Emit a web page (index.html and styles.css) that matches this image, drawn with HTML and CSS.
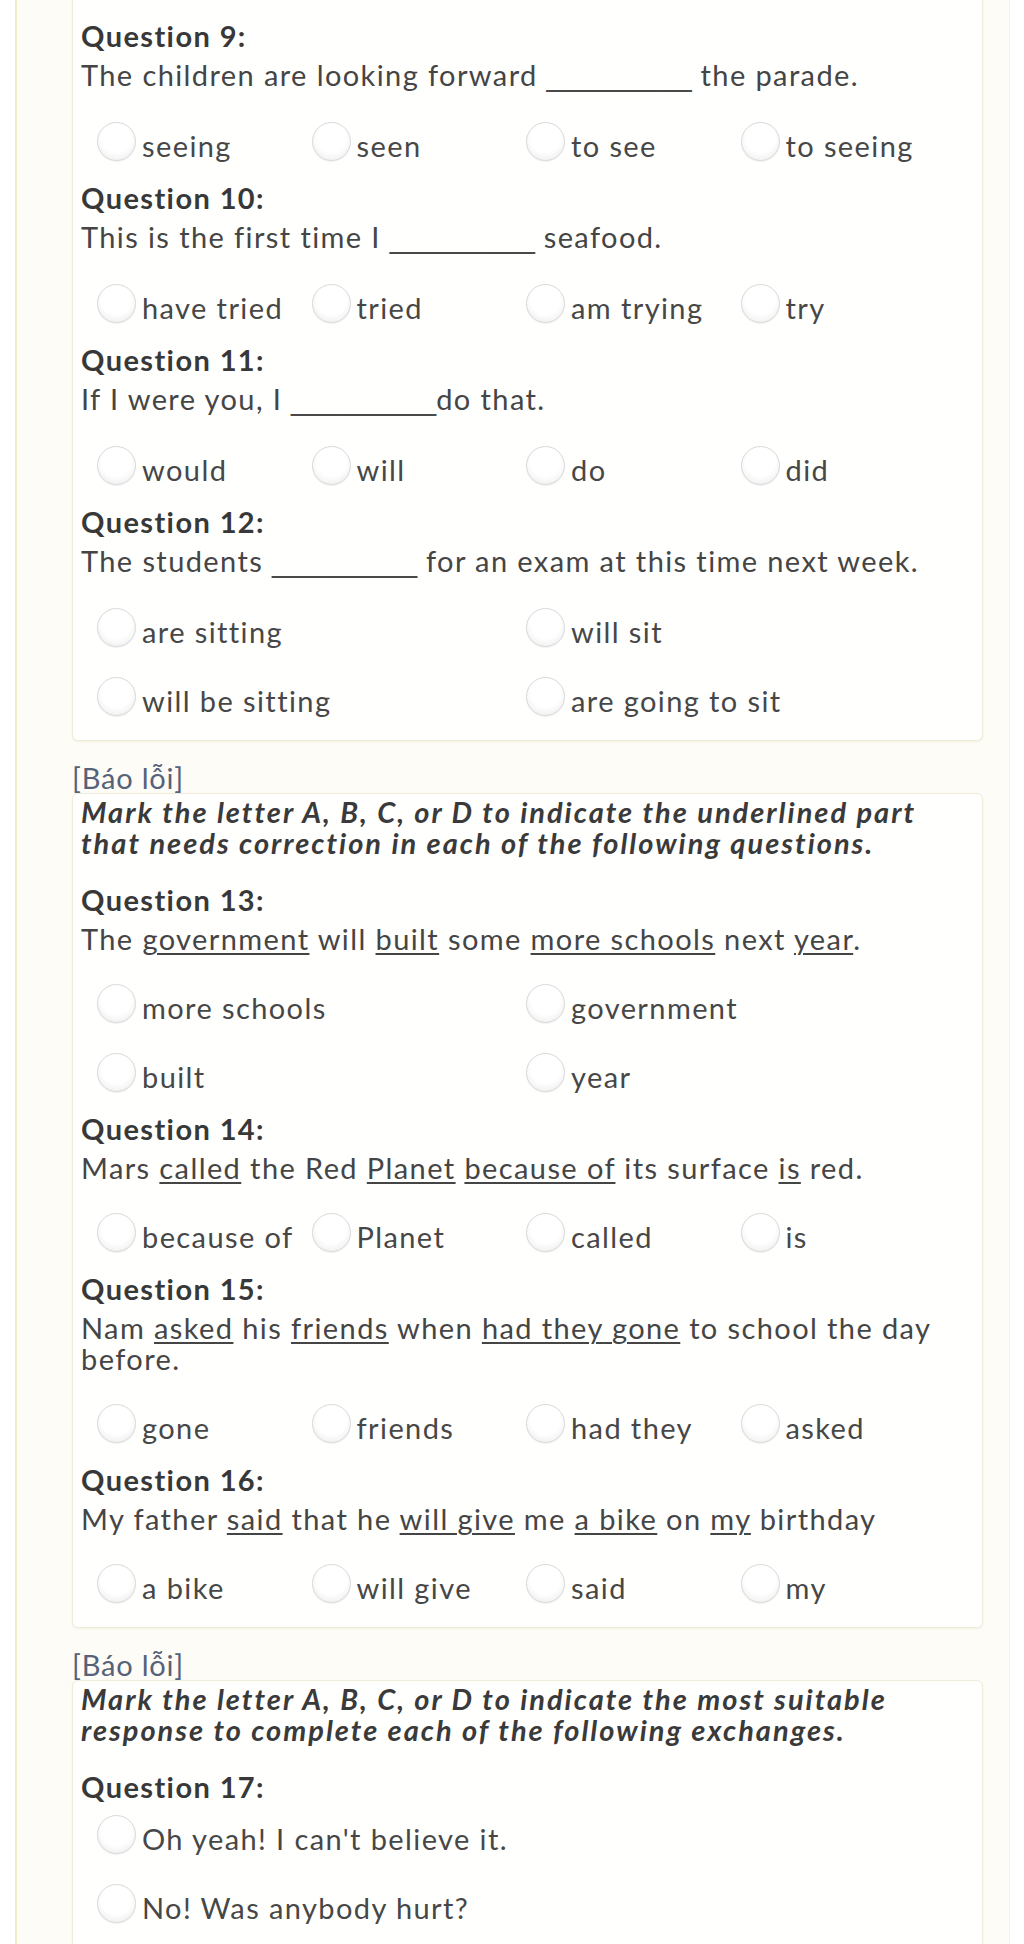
FILE: index.html
```html
<!DOCTYPE html>
<html lang="en">
<head>
<meta charset="utf-8">
<title>Quiz</title>
<link rel="stylesheet" href="styles.css">
</head>
<body>
<div class="page">
  <div class="card card-top">
    <div class="question">
      <div class="q-title">Question 9:</div>
      <div class="q-text">The children are looking forward <span class="blank">_________</span> the parade.</div>
      <div class="options four">
        <label class="opt"><span class="radio"></span><span class="lbl">seeing</span></label>
        <label class="opt"><span class="radio"></span><span class="lbl">seen</span></label>
        <label class="opt"><span class="radio"></span><span class="lbl">to see</span></label>
        <label class="opt"><span class="radio"></span><span class="lbl">to seeing</span></label>
      </div>
    </div>
    <div class="question">
      <div class="q-title">Question 10:</div>
      <div class="q-text">This is the first time I <span class="blank">_________</span> seafood.</div>
      <div class="options four">
        <label class="opt"><span class="radio"></span><span class="lbl">have tried</span></label>
        <label class="opt"><span class="radio"></span><span class="lbl">tried</span></label>
        <label class="opt"><span class="radio"></span><span class="lbl">am trying</span></label>
        <label class="opt"><span class="radio"></span><span class="lbl">try</span></label>
      </div>
    </div>
    <div class="question">
      <div class="q-title">Question 11:</div>
      <div class="q-text">If I were you, I <span class="blank">_________</span>do that.</div>
      <div class="options four">
        <label class="opt"><span class="radio"></span><span class="lbl">would</span></label>
        <label class="opt"><span class="radio"></span><span class="lbl">will</span></label>
        <label class="opt"><span class="radio"></span><span class="lbl">do</span></label>
        <label class="opt"><span class="radio"></span><span class="lbl">did</span></label>
      </div>
    </div>
    <div class="question">
      <div class="q-title">Question 12:</div>
      <div class="q-text">The students <span class="blank">_________</span> for an exam at this time next week.</div>
      <div class="options two">
        <label class="opt"><span class="radio"></span><span class="lbl">are sitting</span></label>
        <label class="opt"><span class="radio"></span><span class="lbl">will sit</span></label>
        <label class="opt"><span class="radio"></span><span class="lbl">will be sitting</span></label>
        <label class="opt"><span class="radio"></span><span class="lbl">are going to sit</span></label>
      </div>
    </div>
  </div>

  <a class="report" href="#">[Báo lỗi]</a>
  <div class="card">
    <div class="instr">Mark the letter A, B, C, or D to indicate the underlined part that needs correction in each of the following questions.</div>
    <div class="question">
      <div class="q-title">Question 13:</div>
      <div class="q-text">The <u>government</u> will <u>built</u> some <u>more schools</u> next <u>year</u>.</div>
      <div class="options two">
        <label class="opt"><span class="radio"></span><span class="lbl">more schools</span></label>
        <label class="opt"><span class="radio"></span><span class="lbl">government</span></label>
        <label class="opt"><span class="radio"></span><span class="lbl">built</span></label>
        <label class="opt"><span class="radio"></span><span class="lbl">year</span></label>
      </div>
    </div>
    <div class="question">
      <div class="q-title">Question 14:</div>
      <div class="q-text">Mars <u>called</u> the Red <u>Planet</u> <u>because of</u> its surface <u>is</u> red.</div>
      <div class="options four">
        <label class="opt"><span class="radio"></span><span class="lbl">because of</span></label>
        <label class="opt"><span class="radio"></span><span class="lbl">Planet</span></label>
        <label class="opt"><span class="radio"></span><span class="lbl">called</span></label>
        <label class="opt"><span class="radio"></span><span class="lbl">is</span></label>
      </div>
    </div>
    <div class="question">
      <div class="q-title">Question 15:</div>
      <div class="q-text">Nam <u>asked</u> his <u>friends</u> when <u>had they</u><u> gone</u> to school the day <span>before.</span></div>
      <div class="options four">
        <label class="opt"><span class="radio"></span><span class="lbl">gone</span></label>
        <label class="opt"><span class="radio"></span><span class="lbl">friends</span></label>
        <label class="opt"><span class="radio"></span><span class="lbl">had they</span></label>
        <label class="opt"><span class="radio"></span><span class="lbl">asked</span></label>
      </div>
    </div>
    <div class="question">
      <div class="q-title">Question 16:</div>
      <div class="q-text">My father <u>said</u> that he <u>will give</u> me <u>a bike</u> on <u>my</u> birthday</div>
      <div class="options four">
        <label class="opt"><span class="radio"></span><span class="lbl">a bike</span></label>
        <label class="opt"><span class="radio"></span><span class="lbl">will give</span></label>
        <label class="opt"><span class="radio"></span><span class="lbl">said</span></label>
        <label class="opt"><span class="radio"></span><span class="lbl">my</span></label>
      </div>
    </div>
  </div>

  <a class="report" href="#">[Báo lỗi]</a>
  <div class="card">
    <div class="instr">Mark the letter A, B, C, or D to indicate the most suitable response to complete each of the following exchanges.</div>
    <div class="question">
      <div class="q-title">Question 17:</div>
      <div class="options one no-text">
        <label class="opt"><span class="radio"></span><span class="lbl">Oh yeah! I can't believe it.</span></label>
        <label class="opt"><span class="radio"></span><span class="lbl">No! Was anybody hurt?</span></label>
      </div>
    </div>
  </div>
</div>
</body>
</html>
```

FILE: styles.css
```css
html, body {
  margin: 0;
  padding: 0;
  background: #ffffff;
}

body {
  font-family: Lato, "Noto Sans", "Liberation Sans", sans-serif;
  font-size: 29px;
  line-height: 31px;
  letter-spacing: 1.4px;
  color: #454545;
  height: 1944px;
  overflow: hidden;
}

.page {
  margin-left: 15px;
  width: 995px;
  box-sizing: border-box;
  min-height: 1944px;
  background: #fdfcf6;
  border-left: 2px solid #efedc6;
  border-right: 1px solid #f5f3e4;
  padding: 0 26px 0 55px;
}

.card {
  background: #fffffe;
  border: 1px solid #f0ecda;
  border-radius: 6px;
  box-shadow: 0 1px 2px rgba(220, 210, 170, 0.25);
  padding: 2px 8px 3px 8px;
}

.card-top {
  border-top: 0;
  border-radius: 0 0 6px 6px;
  padding-top: 20px;
}

.report {
  display: block;
  margin-top: 22px;
  line-height: 30px;
  color: #56627a;
  text-decoration: none;
  letter-spacing: 0.8px;
}

.instr {
  font-weight: 700;
  font-style: italic;
  color: #3a3a3a;
  margin-bottom: 26px;
  letter-spacing: 2px;
}

.question {
  margin-bottom: 21px;
}

.q-title {
  font-weight: 700;
  color: #383838;
  margin-bottom: 8px;
}

.blank {
  font-family: "Liberation Sans", Arial, sans-serif;
  letter-spacing: 0;
  color: #4a4a4a;
}

.q-text u {
  text-decoration-thickness: 2px;
  text-underline-offset: 3px;
}

.options {
  display: grid;
  margin-top: 30px;
  margin-left: 8px;
  row-gap: 30px;
}

.options.no-text {
  margin-top: 13px;
}

.options.four {
  grid-template-columns: repeat(4, 214.5px);
}

.options.two {
  grid-template-columns: repeat(2, 429px);
}

.options.one {
  grid-template-columns: 858px;
}

.opt {
  display: flex;
  align-items: flex-start;
}

.radio {
  flex: none;
  width: 37px;
  height: 37px;
  margin-left: 8px;
  border-radius: 50%;
  border: 1px solid #d9d9d9;
  background: radial-gradient(circle at 50% 40%, #ffffff 50%, #f1f1f1 80%, #e6e6e6 100%);
  box-shadow: 0 1px 1px rgba(0, 0, 0, 0.06);
}

.lbl {
  margin-left: 6px;
  margin-top: 8px;
  color: #474747;
}
```
